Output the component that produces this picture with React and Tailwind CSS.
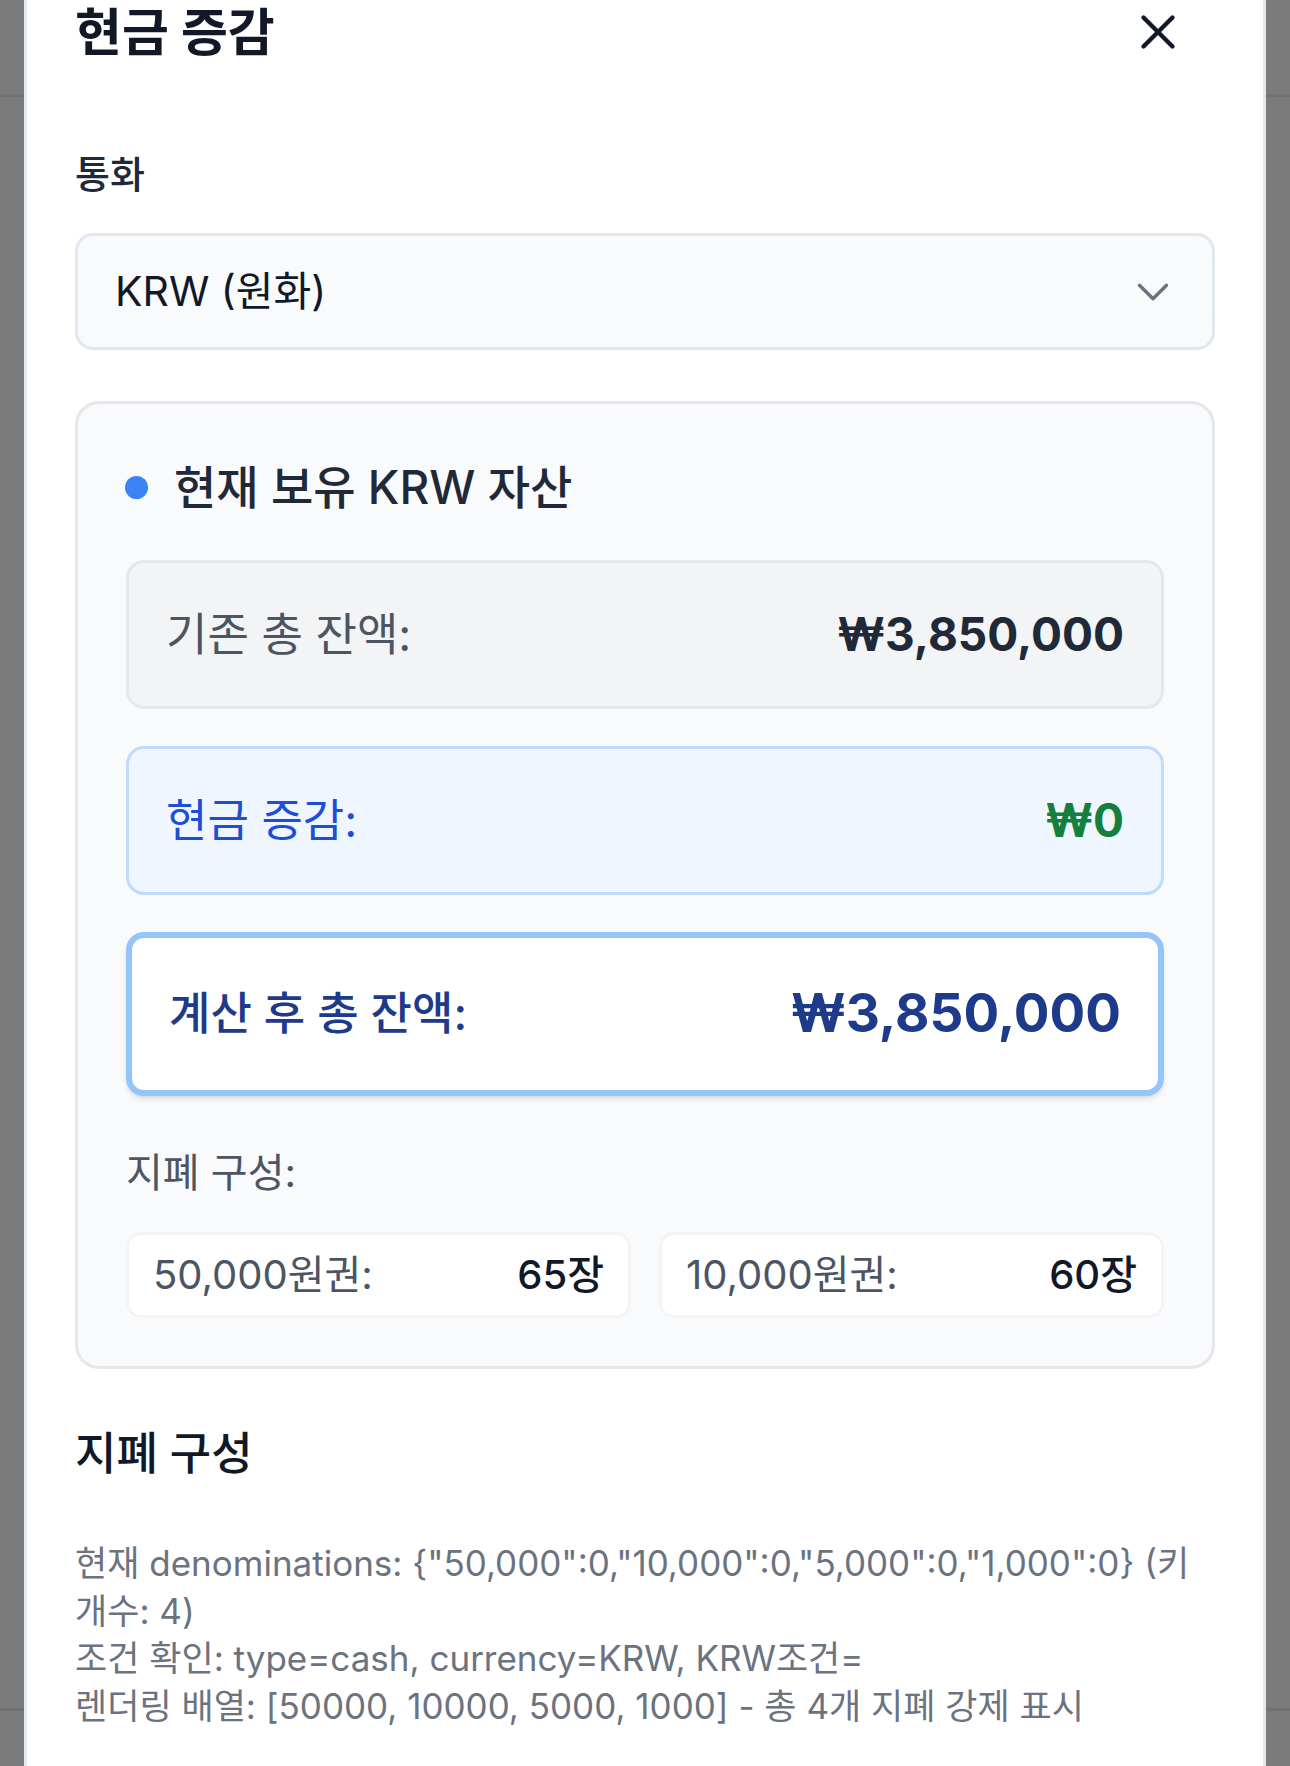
import React from "react";
import { X, ChevronDown } from "lucide-react";

const denominations = [
  { label: "50,000원권:", count: "65장" },
  { label: "10,000원권:", count: "60장" },
];

const App = () => {
  return (
    <div className="relative h-[1766px] w-[1290px] overflow-hidden bg-[#7b7b7b] font-['Inter','Noto_Sans_CJK_KR',sans-serif]">
      {/* page behind the overlay */}
      <div className="h-[97px] border-b-[3px] border-[#727272]" />
      <div className="h-[1614px] border-b-[3px] border-[#727272]" />

      {/* modal */}
      <div className="absolute left-[24px] top-0 h-[1800px] w-[1242px] border-x-[3px] border-[#e2e8f0] bg-white px-[48px]">
        <div className="flex h-[64px] items-center justify-between">
          <h1 className="text-[51px] leading-none font-bold text-[#111827]">현금 증감</h1>
          <button className="mr-[28px] flex h-[58px] w-[58px] items-center justify-center text-[#111827]">
            <X size={58} strokeWidth={1.8} />
          </button>
        </div>

        <label className="mt-[86px] block text-[38px] leading-[48px] font-medium text-[#1f2937]">통화</label>
        <div className="mt-[35px] flex h-[117px] items-center justify-between rounded-[18px] border-[3px] border-[#e2e8f0] bg-[#f8fafc] pl-[37px] pr-[32px]">
          <span className="text-[41px] text-[#111827]">KRW (원화)</span>
          <ChevronDown size={54} strokeWidth={1.5} className="text-[#6b7280]" />
        </div>

        <div className="mt-[51px] rounded-[24px] border-[3px] border-[#e5e7eb] bg-[#f9fafb] px-[48px] pt-[48px] pb-[48px]">
          <div className="flex h-[70px] items-center gap-[26px]">
            <span className="ml-[-1px] h-[23px] w-[23px] rounded-full bg-[#3b82f6]" />
            <span className="text-[46px] font-medium text-[#1f2937]">현재 보유 KRW 자산</span>
          </div>

          <div className="mt-[38px] flex flex-col gap-[37px]">
            <div className="flex h-[149px] items-center justify-between rounded-[18px] border-[3px] border-[#e5e7eb] bg-[#f3f4f6] px-[37px]">
              <span className="text-[45px] text-[#4b5563]">기존 총 잔액:</span>
              <span className="text-[46px] font-bold text-[#1f2937]">₩3,850,000</span>
            </div>
            <div className="flex h-[149px] items-center justify-between rounded-[18px] border-[3px] border-[#bfdbfe] bg-[#eff6ff] px-[37px]">
              <span className="text-[45px] text-[#1d4ed8]">현금 증감:</span>
              <span className="text-[46px] font-bold text-[#15803d]">₩0</span>
            </div>
            <div className="flex h-[164px] items-center justify-between rounded-[18px] border-[6px] border-[#93c5fd] bg-white px-[37px] shadow-md">
              <span className="text-[45px] font-medium text-[#1e3a8a]">계산 후 총 잔액:</span>
              <span className="text-[53px] font-bold text-[#1e3a8a]">₩3,850,000</span>
            </div>
          </div>

          <p className="mt-[53px] text-[40px] leading-[48px] text-[#4b5563]">지폐 구성:</p>
          <div className="mt-[35px] grid grid-cols-2 gap-[28px]">
            {denominations.map((d, i) => (
              <div
                key={i}
                className="flex h-[86px] items-center justify-between rounded-[15px] border-[3px] border-[#f3f4f6] bg-white px-[24px]"
              >
                <span className="text-[40px] text-[#4b5563]">{d.label}</span>
                <span className="text-[40px] font-medium text-[#111827]">{d.count}</span>
              </div>
            ))}
          </div>
        </div>

        <h2 className="mt-[57px] text-[45px] leading-[56px] font-medium text-[#111827]">지폐 구성</h2>

        <div className="mt-[58px] text-[35px] leading-[47.5px] text-[#6b7280]">
          <p>
            현재 denominations: {'{"50,000":0,"10,000":0,"5,000":0,"1,000":0}'} (키 개수: 4)
          </p>
          <p>조건 확인: type=cash, currency=KRW, KRW조건=</p>
          <p>렌더링 배열: [50000, 10000, 5000, 1000] - 총 4개 지폐 강제 표시</p>
        </div>
      </div>
    </div>
  );
};

export default App;
